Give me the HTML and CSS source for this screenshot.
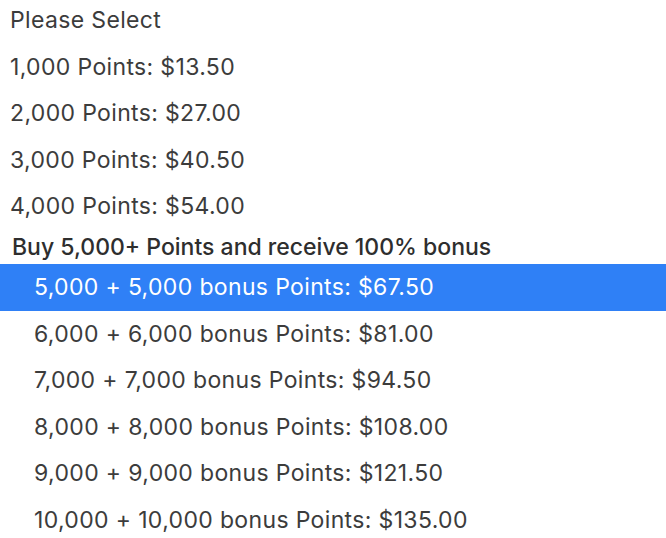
FILE: index.html
```html
<!DOCTYPE html>
<html lang="en">
<head>
  <meta charset="UTF-8" />
  <title>Points</title>
  <link rel="stylesheet" href="styles.css">
</head>
<body>
  <ul class="options" role="listbox">
    <li class="option">Please Select</li>
    <li class="option">1,000 Points: $13.50</li>
    <li class="option">2,000 Points: $27.00</li>
    <li class="option">3,000 Points: $40.50</li>
    <li class="option">4,000 Points: $54.00</li>
    <li class="group">
      <div class="group-label">Buy 5,000+ Points and receive 100% bonus</div>
      <ul class="group-options">
        <li class="option selected">5,000 + 5,000 bonus Points: $67.50</li>
        <li class="option">6,000 + 6,000 bonus Points: $81.00</li>
        <li class="option">7,000 + 7,000 bonus Points: $94.50</li>
        <li class="option">8,000 + 8,000 bonus Points: $108.00</li>
        <li class="option">9,000 + 9,000 bonus Points: $121.50</li>
        <li class="option">10,000 + 10,000 bonus Points: $135.00</li>
      </ul>
    </li>
  </ul>
</body>
</html>
```

FILE: styles.css
```css
body {
  margin: 0;
  background: #fff;
  color: #3c3c3c;
  font-family: 'Inter', 'Liberation Sans', Arial, sans-serif;
  font-size: 23px;
  letter-spacing: 0.35px;
}
ul {
  list-style: none;
  margin: 0;
  padding: 0;
}
.options {
  margin-top: -3px;
}
.option {
  height: 46.6px;
  line-height: 46.6px;
  padding-left: 10px;
  white-space: nowrap;
}
.group-label {
  height: 34px;
  line-height: 34px;
  padding-left: 12px;
  font-weight: 500;
  letter-spacing: 0;
  color: #2e2e2e;
}
.group-options .option {
  padding-left: 34px;
}
.option.selected {
  background: #2f80f6;
  color: #fff;
}
```
